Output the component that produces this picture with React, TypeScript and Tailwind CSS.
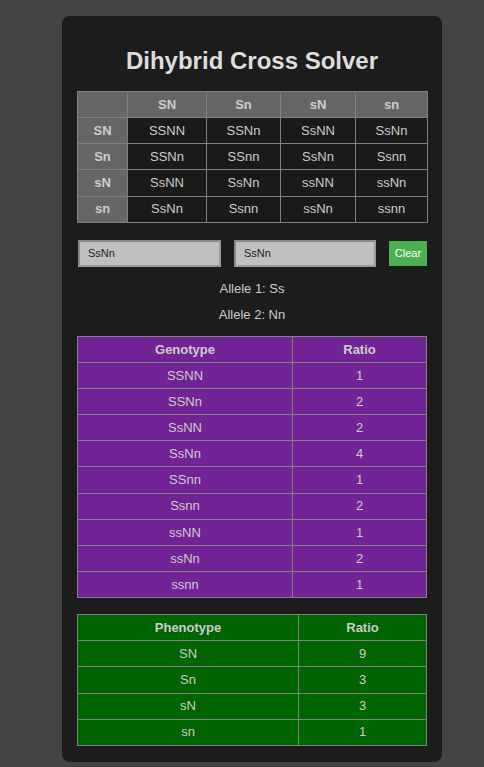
const gametes = ["SN", "Sn", "sN", "sn"];

const grid = [
  ["SSNN", "SSNn", "SsNN", "SsNn"],
  ["SSNn", "SSnn", "SsNn", "Ssnn"],
  ["SsNN", "SsNn", "ssNN", "ssNn"],
  ["SsNn", "Ssnn", "ssNn", "ssnn"],
];

const genotypes: [string, number][] = [
  ["SSNN", 1],
  ["SSNn", 2],
  ["SsNN", 2],
  ["SsNn", 4],
  ["SSnn", 1],
  ["Ssnn", 2],
  ["ssNN", 1],
  ["ssNn", 2],
  ["ssnn", 1],
];

const phenotypes: [string, number][] = [
  ["SN", 9],
  ["Sn", 3],
  ["sN", 3],
  ["sn", 1],
];

const cell = "border border-[#808080] h-[26.15px] p-0 text-center text-[13px]";
const colW = ["w-[79px]", "w-[74px]", "w-[75px]", "w-[72px]"];

const App = () => {
  return (
    <div
      className="min-h-[767px] bg-[#444444] pl-[62px] pt-4 text-[#cccccc]"
      style={{ fontFamily: '"Liberation Sans", Arial, sans-serif' }}
    >
      <div className="w-[380px] rounded-lg bg-[#1c1c1c] px-[15px] pt-[15px] pb-4">
        <h1 className="my-4 text-center text-[24px] font-bold leading-[28px] text-[#dddddd]">
          Dihybrid Cross Solver
        </h1>

        {/* Punnett square */}
        <table className="w-[350px] border-collapse table-fixed">
          <thead>
            <tr className="bg-[#666666]">
              <th className={`${cell} w-[50px] font-bold`}></th>
              {gametes.map((g, i) => (
                <th key={g} className={`${cell} ${colW[i]} font-bold`}>
                  {g}
                </th>
              ))}
            </tr>
          </thead>
          <tbody>
            {grid.map((row, r) => (
              <tr key={r}>
                <th className={`${cell} bg-[#666666] font-bold`}>{gametes[r]}</th>
                {row.map((v, c) => (
                  <td key={c} className={`${cell} bg-[#1a1a1a]`}>
                    {v}
                  </td>
                ))}
              </tr>
            ))}
          </tbody>
        </table>

        <div className="mt-[17px] flex items-center">
          <input
            defaultValue="SsNn"
            className="ml-px h-[27px] w-[143px] border-2 border-t-[#8a8a8a] border-l-[#8a8a8a] border-r-[#9a9a9a] border-b-[#9a9a9a] bg-[#c0c0c0] px-2 text-[11px] text-[#222222] outline-none"
          />
          <input
            defaultValue="SsNn"
            className="ml-[13px] h-[27px] w-[142px] border-2 border-t-[#8a8a8a] border-l-[#8a8a8a] border-r-[#9a9a9a] border-b-[#9a9a9a] bg-[#c0c0c0] px-2 text-[11px] text-[#222222] outline-none"
          />
          <button className="ml-auto h-[25px] w-[38px] bg-[#4caf50] text-[11px] text-white">
            Clear
          </button>
        </div>

        <p className="mt-[14px] text-center text-[13px] leading-[15px]">Allele 1: Ss</p>
        <p className="mt-[11px] text-center text-[13px] leading-[15px]">Allele 2: Nn</p>

        {/* Genotype ratios */}
        <table className="mt-[14px] w-[350px] border-collapse table-fixed bg-[#722497]">
          <thead>
            <tr>
              <th className={`${cell} w-[215px] font-bold`}>Genotype</th>
              <th className={`${cell} font-bold`}>Ratio</th>
            </tr>
          </thead>
          <tbody>
            {genotypes.map(([g, n]) => (
              <tr key={g}>
                <td className={cell}>{g}</td>
                <td className={cell}>{n}</td>
              </tr>
            ))}
          </tbody>
        </table>

        {/* Phenotype ratios */}
        <table className="mt-4 w-[350px] border-collapse table-fixed bg-[#006400]">
          <thead>
            <tr>
              <th className={`${cell} w-[221px] font-bold`}>Phenotype</th>
              <th className={`${cell} font-bold`}>Ratio</th>
            </tr>
          </thead>
          <tbody>
            {phenotypes.map(([p, n]) => (
              <tr key={p}>
                <td className={cell}>{p}</td>
                <td className={cell}>{n}</td>
              </tr>
            ))}
          </tbody>
        </table>
      </div>
    </div>
  );
};

export default App;
